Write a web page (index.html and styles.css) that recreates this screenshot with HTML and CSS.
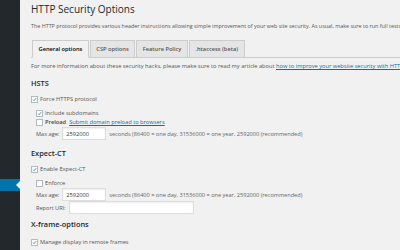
FILE: index.html
```html
<!DOCTYPE html>
<html lang="en">
<head>
    <meta charset="UTF-8">
    <meta name="viewport" content="width=device-width, initial-scale=1.0">
    <title>HTTP Security Options</title>
    <link rel="stylesheet" href="styles.css">
</head>
<body>
    <div class="admin">
        <nav class="menu">
            <div class="menu-item current"></div> <!-- Settings, current page -->
        </nav>
        <main class="wrap">
            <h1>HTTP Security Options</h1>
            <p class="intro">The HTTP protocol provides various header instructions allowing simple improvement of your web site security. As usual, make sure to run full tests on your website after any change.</p>

            <div class="tabs">
                <a class="tab active">General options</a>
                <a class="tab">CSP options</a>
                <a class="tab">Feature Policy</a>
                <a class="tab">.htaccess (beta)</a>
            </div>

            <p class="intro more">For more information about these security hacks, please make sure to read my article about <a href="#">how to improve your website security with HTTP headers</a>.</p>

            <!-- HSTS -->
            <h2>HSTS</h2>
            <label class="check first"><span class="box on"><svg viewBox="0 0 10 10"><path d="M2 5.2l2.1 2.2L8.3 2.4"/></svg></span>Force HTTPS protocol</label>
            <div class="sub">
                <label class="check"><span class="box on"><svg viewBox="0 0 10 10"><path d="M2 5.2l2.1 2.2L8.3 2.4"/></svg></span>Include subdomains</label>
                <label class="check tight"><span class="box"></span><b>Preload</b> <a href="#">Submit domain preload to browsers</a></label>
                <div class="field">
                    <span class="lbl">Max age:</span>
                    <input type="text" class="num" value="2592000">
                    <span class="hint">seconds (86400 = one day, 31536000 = one year, 2592000 (recommended)</span>
                </div>
            </div>

            <!-- Expect-CT -->
            <h2>Expect-CT</h2>
            <label class="check first"><span class="box on"><svg viewBox="0 0 10 10"><path d="M2 5.2l2.1 2.2L8.3 2.4"/></svg></span>Enable Expect-CT</label>
            <div class="sub">
                <label class="check"><span class="box"></span>Enforce</label>
                <div class="field">
                    <span class="lbl">Max age:</span>
                    <input type="text" class="num" value="2592000">
                    <span class="hint">seconds (86400 = one day, 31536000 = one year, 2592000 (recommended)</span>
                </div>
                <div class="field uri">
                    <span class="lbl">Report URI:</span>
                    <input type="text" class="url" value="">
                </div>
            </div>

            <!-- X-Frame-Options -->
            <h2 class="last">X-frame-options</h2>
            <label class="check first low"><span class="box on"><svg viewBox="0 0 10 10"><path d="M2 5.2l2.1 2.2L8.3 2.4"/></svg></span>Manage display in remote frames</label>
        </main>
    </div>
</body>
</html>
```

FILE: styles.css
```css
html, body { margin: 0; padding: 0; height: 100%; overflow: hidden; }
body { background: #f1f1f1; color: #444; font-family: 'Open Sans', sans-serif; }
.admin { display: flex; height: 100%; }

/* admin menu, only the edge is visible */
.menu { width: 20px; flex: none; background: #23282d; }
.menu-item { height: 12px; }
.menu-item.current { margin-top: 179px; background: #0073aa; position: relative; }
.menu-item.current::after {
    content: "";
    position: absolute;
    right: 0;
    top: 2px;
    border: 4px solid transparent;
    border-right-color: #f1f1f1;
}

.wrap { flex: 1; min-width: 0; padding: 2px 0 0 11px; white-space: nowrap; overflow: hidden; }
.wrap h1 { margin: 0; font-size: 10px; line-height: 14px; font-weight: 400; color: #23282d; }
.intro { margin: 6px 0 0; font-size: 5.4px; line-height: 8px; color: #555; }
.intro a, .check a { color: #0073aa; }
.more { margin-top: 4px; font-size: 5.7px; }

.tabs { display: flex; gap: 1px; margin-top: 10px; border-bottom: 1px solid #ccc; padding-left: 1px; }
.tab { margin-bottom: -1px; height: 16px; line-height: 16px; padding: 0 5.5px; font-size: 5.7px; font-weight: 600; color: #555; background: #e5e5e5; border: 1px solid #ccc; border-bottom: none; }
.tab.active { background: #f1f1f1; color: #000; border-bottom: 1px solid #f1f1f1; }

.wrap h2 { margin: 8px 0 0; font-size: 7.4px; line-height: 10px; font-weight: 600; color: #23282d; }
.wrap h2.last { margin-top: 5px; }

.check { display: flex; align-items: center; gap: 2px; margin-top: 6px; height: 8px; font-size: 5.7px; line-height: 8px; color: #555; }
.check.first { margin-top: 7px; }
.check.first.low { margin-top: 9px; }
.check.tight { margin-top: 1px; }
.check b { font-weight: 600; color: #444; }
.check a { margin-left: 1px; }
.box { flex: none; width: 5px; height: 5px; border: 1px solid #b4b9be; background: #fff; display: flex; }
.box svg { width: 100%; height: 100%; fill: none; stroke: #1e8cbe; stroke-width: 1.8; }

.sub { padding-left: 5px; }
.field { display: flex; align-items: center; gap: 3px; margin-top: 1px; height: 13px; font-size: 5.6px; color: #555; }
.field input { box-sizing: border-box; height: 13px; margin: 0; padding: 0 3px; font-family: inherit; font-size: 5.7px; color: #32373c; background: #fff; border: 1px solid #ddd; box-shadow: inset 0 1px 2px rgba(0, 0, 0, 0.07); }
.field .num { width: 44px; }
.field .url { width: 125px; }
.field .hint { color: #666; }
.field.uri { margin-top: 0; }
```
